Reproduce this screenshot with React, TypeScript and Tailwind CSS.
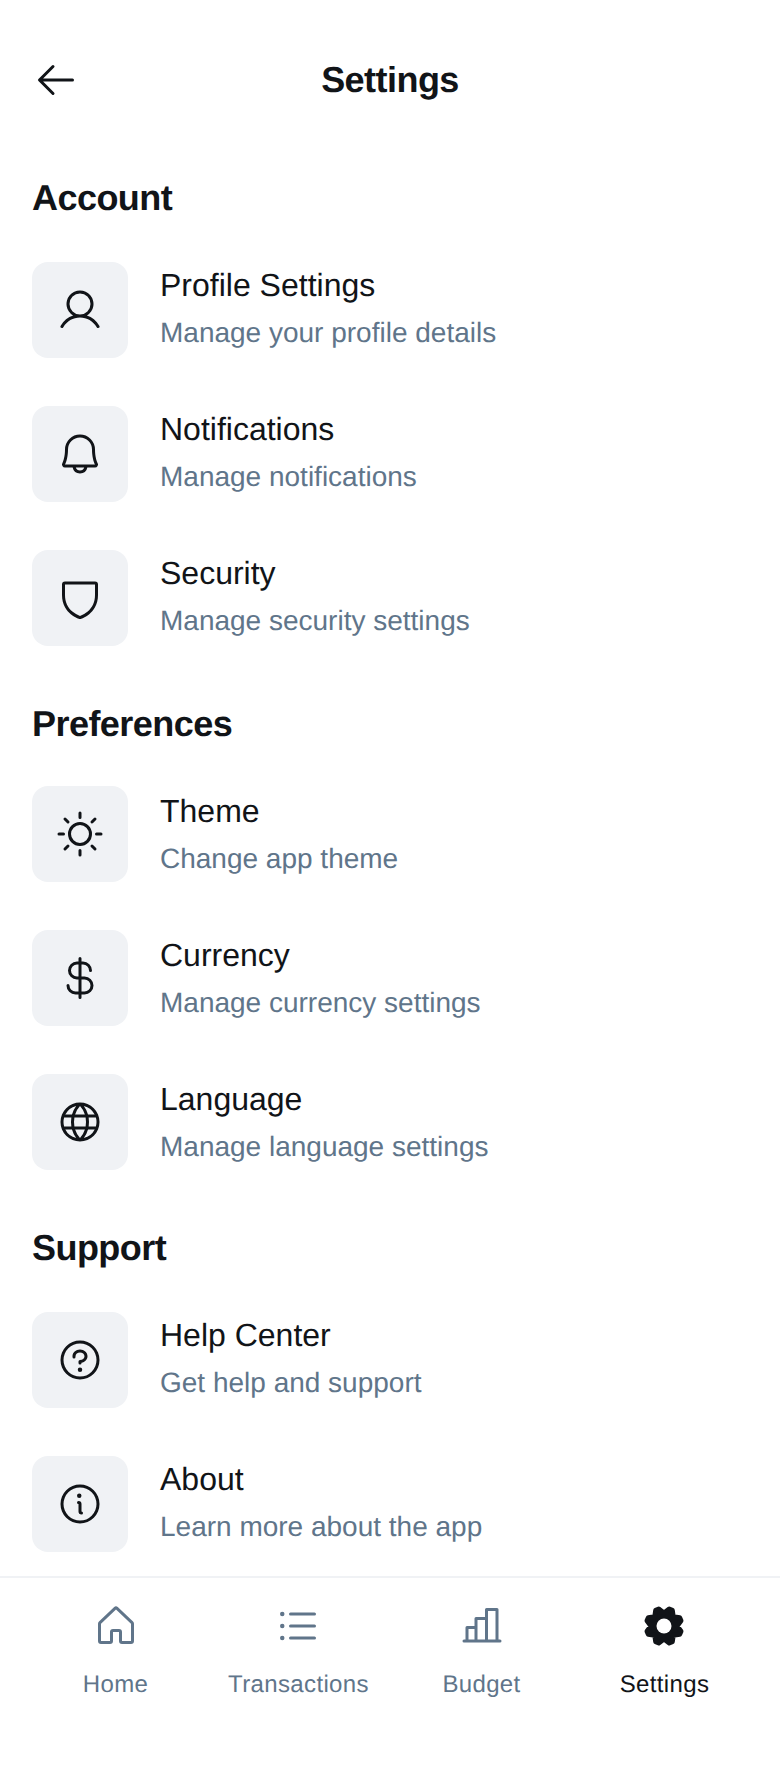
import { PiArrowLeft, PiUser, PiBell, PiShield, PiSun, PiCurrencyDollar, PiGlobe, PiQuestion, PiInfo, PiListBullets, PiChartBar } from "react-icons/pi";
import type { ComponentType } from "react";

type Icon = ComponentType<{ className?: string }>;
type Item = { icon: Icon; title: string; text: string };

function House({ className }: { className?: string }) {
  return (
    <svg viewBox="0 0 256 256" fill="currentColor" className={className}>
      <path d="M218.83,103.77l-80-75.48a1.14,1.14,0,0,1-.11-.11,16,16,0,0,0-21.53,0l-.11.11L37.17,103.77A16,16,0,0,0,32,115.55V208a16,16,0,0,0,16,16H96a16,16,0,0,0,16-16V160h32v48a16,16,0,0,0,16,16h48a16,16,0,0,0,16-16V115.55A16,16,0,0,0,218.83,103.77ZM208,208H160V160a16,16,0,0,0-16-16H112a16,16,0,0,0-16,16v48H48V115.55l.11-.1L128,40l79.9,75.43.11.1Z" />
    </svg>
  );
}

// Eight lobes; each one goes from a notch out to two rounded corners.
const polar = (r: number, deg: number) => {
  const a = (deg * Math.PI) / 180;
  return `${(128 + r * Math.sin(a)).toFixed(2)},${(128 - r * Math.cos(a)).toFixed(2)}`;
};
const gearPoints = Array.from({ length: 8 }, (_, i) => [polar(70, i * 45), polar(95, i * 45 + 17), polar(95, i * 45 + 28)].join(" ")).join(" ");

function Gear({ className }: { className?: string }) {
  return (
    <svg viewBox="0 0 256 256" className={className}>
      <polygon points={gearPoints} fill="currentColor" stroke="currentColor" strokeWidth="26" strokeLinejoin="round" />
      <circle cx="128" cy="128" r="40" fill="#fff" />
    </svg>
  );
}

const sections: { title: string; heading: string; textPad: string; items: Item[] }[] = [
  { title: "Account", heading: "pb-[17px]", textPad: "pt-[23px]", items: [
    { icon: PiUser, title: "Profile Settings", text: "Manage your profile details" },
    { icon: PiBell, title: "Notifications", text: "Manage notifications" },
    { icon: PiShield, title: "Security", text: "Manage security settings" },
  ] },
  { title: "Preferences", heading: "pb-[15px]", textPad: "pt-[25px]", items: [
    { icon: PiSun, title: "Theme", text: "Change app theme" },
    { icon: PiCurrencyDollar, title: "Currency", text: "Manage currency settings" },
    { icon: PiGlobe, title: "Language", text: "Manage language settings" },
  ] },
  { title: "Support", heading: "pb-[17px]", textPad: "pt-[23px]", items: [
    { icon: PiQuestion, title: "Help Center", text: "Get help and support" },
    { icon: PiInfo, title: "About", text: "Learn more about the app" },
  ] },
];

const tabs: { icon: Icon; label: string; color: string; pad: string }[] = [
  { icon: House, label: "Home", color: "text-[#60758a]", pad: "pl-px" },
  { icon: PiListBullets, label: "Transactions", color: "text-[#60758a]", pad: "pr-px" },
  { icon: PiChartBar, label: "Budget", color: "text-[#60758a]", pad: "pl-px" },
  { icon: Gear, label: "Settings", color: "text-[#111418]", pad: "pr-px" },
];

export default function App() {
  return (
    <div className="flex h-[1766px] w-[780px] flex-col justify-between overflow-hidden bg-white font-['Liberation_Sans',Arial,sans-serif] text-[#111418] [text-rendering:geometricPrecision]">
      <div>
        <header className="flex items-center justify-between p-8 pb-4">
          <div className="flex size-24 items-center">
            <PiArrowLeft className="size-12" />
          </div>
          <h1 className="flex-1 pr-24 pb-px text-center text-[36px] leading-[45px] font-bold tracking-[-0.54px]">Settings</h1>
        </header>
        {sections.map((s) => (
          <section key={s.title}>
            <div className={s.heading}>
              <h2 className="px-8 pt-[31px] pb-px text-[36px] leading-[45px] font-bold tracking-[-0.54px]">{s.title}</h2>
            </div>
            {s.items.map(({ icon: ItemIcon, title, text }) => (
              <div key={title} className="flex h-36 items-center gap-8 px-8">
                <div className="flex size-24 shrink-0 items-center justify-center rounded-2xl bg-[#f0f2f5]">
                  <ItemIcon className="size-12" />
                </div>
                <div className="h-full">
                  <div className={s.textPad}>
                    <p className="text-[32px] leading-12">{title}</p>
                    <p className="text-[28px] leading-[47px] text-[#60758a]">{text}</p>
                  </div>
                </div>
              </div>
            ))}
          </section>
        ))}
      </div>
      <nav className="flex h-[190px] shrink-0 gap-4 border-t-2 border-[#f0f2f5] bg-white px-8 pt-4">
        {tabs.map(({ icon: TabIcon, label, color, pad }) => (
          <div key={label} className={`flex flex-1 flex-col items-center gap-2 ${color}`}>
            <div className={`flex h-16 items-center justify-center ${pad}`}>
              <TabIcon className="size-12" />
            </div>
            <p className="text-[24px] leading-[37px] tracking-[0.36px]">{label}</p>
          </div>
        ))}
      </nav>
    </div>
  );
}
